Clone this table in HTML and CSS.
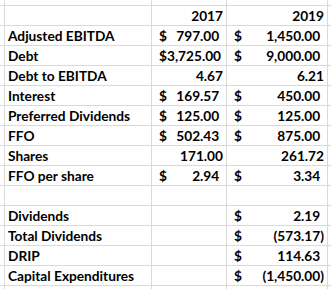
FILE: index.html
```html
<!DOCTYPE html>
<html>
<head>
<meta charset="utf-8">
<link rel="stylesheet" href="styles.css">
</head>
<body>
<div class="sheet">
  <div class="c"></div><div class="c"></div><div class="c"></div><div class="c"></div><div class="c"></div>

  <div class="c"></div><div class="c"></div><div class="c num">2017</div><div class="c num">2019</div><div class="c"></div>

  <div class="c"></div><div class="c label">Adjusted EBITDA</div>
  <div class="c acc"><span>$</span><span class="v">797.00<i class="p">)</i></span></div>
  <div class="c acc"><span>$</span><span class="v">1,450.00<i class="p">)</i></span></div><div class="c"></div>

  <div class="c"></div><div class="c label">Debt</div>
  <div class="c acc"><span>$</span><span class="v">3,725.00<i class="p">)</i></span></div>
  <div class="c acc"><span>$</span><span class="v">9,000.00<i class="p">)</i></span></div><div class="c"></div>

  <div class="c"></div><div class="c label">Debt to EBITDA</div>
  <div class="c num">4.67</div><div class="c num">6.21</div><div class="c"></div>

  <div class="c"></div><div class="c label">Interest</div>
  <div class="c acc"><span>$</span><span class="v">169.57<i class="p">)</i></span></div>
  <div class="c acc"><span>$</span><span class="v">450.00<i class="p">)</i></span></div><div class="c"></div>

  <div class="c"></div><div class="c label">Preferred Dividends</div>
  <div class="c acc"><span>$</span><span class="v">125.00<i class="p">)</i></span></div>
  <div class="c acc"><span>$</span><span class="v">125.00<i class="p">)</i></span></div><div class="c"></div>

  <div class="c"></div><div class="c label">FFO</div>
  <div class="c acc"><span>$</span><span class="v">502.43<i class="p">)</i></span></div>
  <div class="c acc"><span>$</span><span class="v">875.00<i class="p">)</i></span></div><div class="c"></div>

  <div class="c"></div><div class="c label">Shares</div>
  <div class="c num">171.00</div><div class="c num">261.72</div><div class="c"></div>

  <div class="c"></div><div class="c label">FFO per share</div>
  <div class="c acc"><span>$</span><span class="v">2.94<i class="p">)</i></span></div>
  <div class="c acc"><span>$</span><span class="v">3.34<i class="p">)</i></span></div><div class="c"></div>

  <div class="c"></div><div class="c"></div><div class="c"></div><div class="c"></div><div class="c"></div>

  <div class="c"></div><div class="c label">Dividends</div><div class="c"></div>
  <div class="c acc"><span>$</span><span class="v">2.19<i class="p">)</i></span></div><div class="c"></div>

  <div class="c"></div><div class="c label">Total Dividends</div><div class="c"></div>
  <div class="c acc"><span>$</span><span class="v">(573.17<i class="p show">)</i></span></div><div class="c"></div>

  <div class="c"></div><div class="c label">DRIP</div><div class="c"></div>
  <div class="c acc"><span>$</span><span class="v">114.63<i class="p">)</i></span></div><div class="c"></div>

  <div class="c"></div><div class="c label">Capital Expenditures</div><div class="c"></div>
  <div class="c acc"><span>$</span><span class="v">(1,450.00<i class="p show">)</i></span></div><div class="c"></div>

  <div class="c"></div><div class="c"></div><div class="c"></div><div class="c"></div><div class="c"></div>
</div>
</body>
</html>
```
FILE: styles.css
```css
html, body {
  margin: 0;
  padding: 0;
  background: #ffffff;
  overflow: hidden;
}

.sheet {
  display: grid;
  grid-template-columns: 4px 146px 74px 100px 10px;
  grid-template-rows: 5px repeat(14, 19px) 10px;
  gap: 1px;
  background: #d9d9d9;
  width: 338px;
  font-family: Lato, "Liberation Sans", sans-serif;
  font-weight: 700;
  font-size: 13.7px;
  line-height: 19px;
  color: #000000;
}

.c {
  background: #ffffff;
  white-space: nowrap;
  overflow: hidden;
}

.label {
  padding-left: 3px;
}

.num {
  text-align: right;
  padding-right: 3px;
}

.acc {
  display: flex;
  justify-content: space-between;
  padding-left: 7px;
  padding-right: 3px;
}

.p {
  font-style: normal;
  visibility: hidden;
}

.p.show {
  visibility: visible;
}
```
